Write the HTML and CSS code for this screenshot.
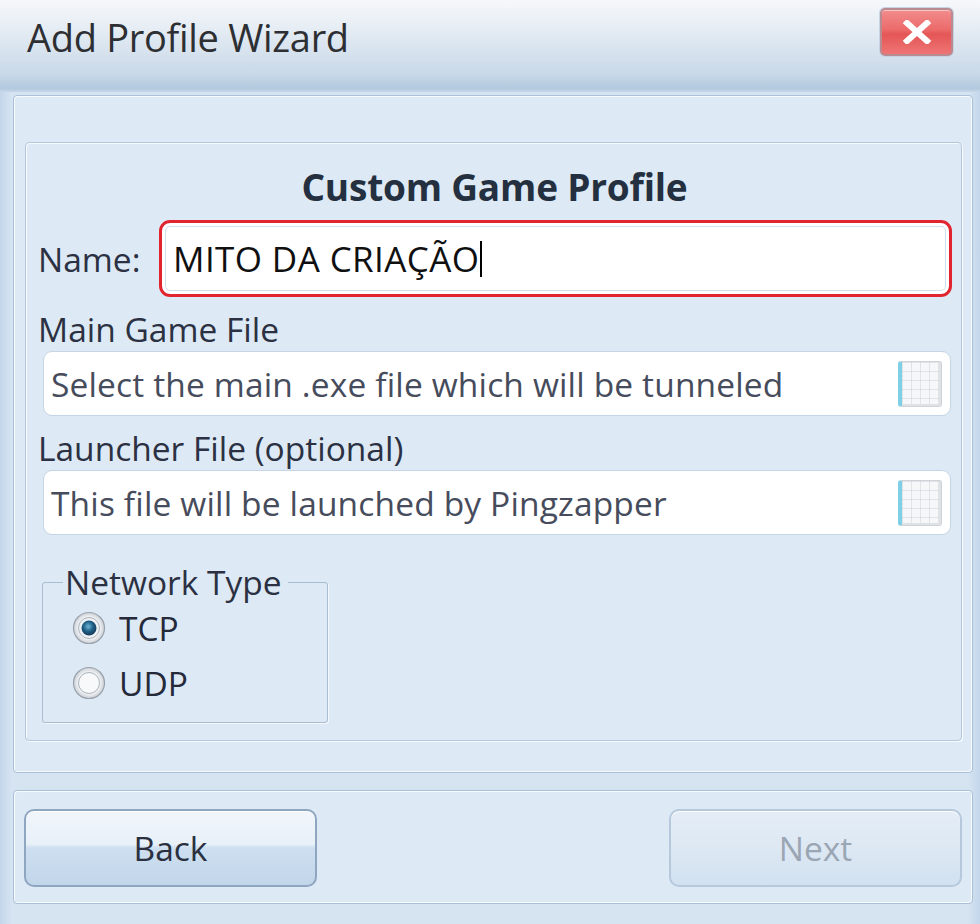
FILE: index.html
```html
<!DOCTYPE html>
<html>
<head>
<meta charset="utf-8">
<link rel="stylesheet" href="styles.css">
</head>
<body>
<div class="window">
  <div class="titlebar">
    <div class="title">Add Profile Wizard</div>
    <div class="close">
      <svg width="30" height="24" viewBox="0 0 30 24"><path d="M5 3 L25 21 M25 3 L5 21" stroke="#fff" stroke-width="6" stroke-linecap="square"/></svg>
    </div>
  </div>
  <div class="panel main">
    <div class="group">
      <div class="heading">Custom Game Profile</div>
      <div class="name-row">
        <div class="label name-label">Name:</div>
        <div class="name-box">MITO DA CRIAÇÃO<span class="caret"></span></div>
      </div>
      <div class="label field-label">Main Game File</div>
      <div class="file-box">
        <span class="placeholder">Select the main .exe file which will be tunneled</span>
        <span class="browse"></span>
      </div>
      <div class="label field-label">Launcher File (optional)</div>
      <div class="file-box">
        <span class="placeholder">This file will be launched by Pingzapper</span>
        <span class="browse"></span>
      </div>
      <fieldset class="net">
        <legend class="legend">Network Type</legend>
        <div class="radio-row">
          <svg class="radio" width="34" height="34" viewBox="0 0 34 34">
            <defs>
              <radialGradient id="ring" cx="50%" cy="50%" r="50%">
                <stop offset="60%" stop-color="#ffffff"/>
                <stop offset="100%" stop-color="#c9ced4"/>
              </radialGradient>
              <radialGradient id="dot" cx="45%" cy="40%" r="60%">
                <stop offset="0%" stop-color="#6fb6d8"/>
                <stop offset="55%" stop-color="#1f5f86"/>
                <stop offset="100%" stop-color="#163c5a"/>
              </radialGradient>
            </defs>
            <circle cx="17" cy="17" r="15.5" fill="url(#ring)" stroke="#9aa3ad" stroke-width="1.2"/>
            <circle cx="17" cy="17" r="10.5" fill="#eef2f5" stroke="#aab3bc" stroke-width="1"/>
            <circle cx="17" cy="17" r="7.5" fill="url(#dot)"/>
          </svg>
          <span class="radio-label">TCP</span>
        </div>
        <div class="radio-row">
          <svg class="radio" width="34" height="34" viewBox="0 0 34 34">
            <circle cx="17" cy="17" r="15.5" fill="url(#ring)" stroke="#9aa3ad" stroke-width="1.2"/>
            <circle cx="17" cy="17" r="10.5" fill="#f7f9fa" stroke="#aab3bc" stroke-width="1"/>
          </svg>
          <span class="radio-label">UDP</span>
        </div>
      </fieldset>
    </div>
  </div>
  <div class="panel footer">
    <div class="btn">Back</div>
    <div class="btn disabled">Next</div>
  </div>
</div>
</body>
</html>
```
FILE: styles.css
```css
* { box-sizing: border-box; }
html, body { margin: 0; padding: 0; }
body {
  background: #cfdeee;
  font-family: "Open Sans", "DejaVu Sans", sans-serif;
  color: #2b3140;
}
.window {
  width: 980px;
  height: 924px;
  display: flex;
  flex-direction: column;
  background: linear-gradient(to right, #c3d6ea 0px, #d6e4f2 12px, #d6e4f2 968px, #c3d6ea 980px);
  overflow: hidden;
}
.titlebar {
  height: 92px;
  flex: none;
  display: flex;
  align-items: flex-start;
  padding-left: 27px;
  background: linear-gradient(to bottom, #f6f8fb 0%, #e3ebf3 35%, #c9d9e8 80%, #b3c9de 96%, #c6d7e8 100%);
}
.title {
  font-size: 38px;
  line-height: 1;
  margin-top: 18px;
  color: #2d2f33;
  letter-spacing: -0.3px;
}
.close {
  margin-left: auto;
  margin-right: 27px;
  margin-top: 8px;
  width: 73px;
  height: 48px;
  border-radius: 5px;
  border: 2px solid #b98a92;
  background: linear-gradient(to bottom, #f28c8c 0%, #ec6a6a 45%, #e55656 55%, #ee7575 100%);
  box-shadow: 0 0 0 1px #c6d3e2, inset 0 1px 0 rgba(255,255,255,0.5);
  display: flex;
  align-items: center;
  justify-content: center;
}
.panel {
  background: #dde9f5;
  border: 1px solid #a9c0d8;
  border-radius: 4px;
  box-shadow: inset 1px 1px 0 #f7fbff, inset -1px -1px 0 #f7fbff;
}
.main {
  margin: 3px 7px 0 13px;
  height: 678px;
  padding: 46px 10px 0 11px;
  flex: none;
}
.group {
  height: 599px;
  border: 1px solid #b3c7dc;
  border-radius: 4px;
  box-shadow: inset 1px 1px 0 #f8fbfe, 1px 1px 0 #f8fbfe;
  background: #dde9f5;
  padding: 0 10px 0 12px;
}
.heading {
  font-weight: bold;
  font-size: 37px;
  text-align: center;
  line-height: 44px;
  margin-top: 22px;
  color: #243040;
  letter-spacing: -0.2px;
}
.name-row {
  display: flex;
  align-items: center;
  margin-top: 11px;
}
.label {
  font-size: 33.5px;
  line-height: 40px;
  color: #2b3142;
}
.name-label {
  width: 121px;
  flex: none;
}
.name-box {
  flex: 1;
  height: 77px;
  margin-right: -1px;
  border: 3px solid #e2242e;
  border-radius: 11px;
  background: #fff;
  box-shadow: inset 0 0 0 3px #ffffff, inset 0 0 0 4px #d2dfec;
  font-size: 35px;
  color: #101010;
  padding-left: 11px;
  display: flex;
  align-items: center;
  letter-spacing: 0.4px;
}
.caret {
  display: inline-block;
  width: 2px;
  height: 36px;
  background: #000;
  margin-left: 1px;
}
.field-label {
  margin-top: 12px;
}
.file-box {
  margin: 2px 0 0 5px;
  width: 908px;
  height: 65px;
  background: #fff;
  border: 1px solid #c5d5e5;
  border-radius: 9px;
  display: flex;
  align-items: center;
  padding-left: 7px;
  padding-right: 8px;
}
.placeholder {
  font-size: 33.5px;
  color: #464c5c;
  flex: 1;
  letter-spacing: 0.15px;
}
.browse {
  width: 44px;
  height: 46px;
  border: 1px solid #cfd3d8;
  border-left: 4px solid #7fd0e6;
  border-radius: 3px;
  background-color: #f6f7f8;
  background-image:
    linear-gradient(to right, rgba(200,205,210,0.45) 1px, transparent 1px),
    linear-gradient(to bottom, rgba(200,205,210,0.45) 1px, transparent 1px);
  background-size: 9px 9px;
  box-shadow: inset -2px -2px 0 #dfe2e5;
}
.net {
  margin: 30px 0 0 4px;
  width: 286px;
  height: 158px;
  border: 1px solid #a9bcd0;
  border-radius: 3px;
  padding: 0 0 0 29px;
  box-shadow: 1px 1px 0 #f4f8fc;
}
.legend {
  font-size: 33.5px;
  line-height: 34px;
  color: #2b3142;
  padding: 0 6px 0 2px;
  margin-left: -9px;
}
.radio-row {
  display: flex;
  align-items: center;
  height: 55px;
}
.radio-row:first-of-type { margin-top: 1px; }
.radio { flex: none; }
.radio-label {
  font-size: 33.5px;
  margin-left: 13px;
  color: #252a3a;
}
.footer {
  margin: 17px 7px 0 13px;
  height: 114px;
  flex: none;
  display: flex;
  justify-content: space-between;
  align-items: flex-start;
  padding: 18px 10px 0 10px;
}
.btn {
  width: 293px;
  height: 78px;
  border: 2px solid #8fa6c0;
  border-radius: 10px;
  background: linear-gradient(to bottom, #f1f6fb 0%, #e8f0f8 45%, #cddff0 50%, #c2d6ea 100%);
  box-shadow: inset 0 1px 0 #fff;
  font-size: 33.5px;
  color: #2a3040;
  display: flex;
  align-items: center;
  justify-content: center;
}
.btn.disabled {
  border-color: #b5c8dc;
  background: linear-gradient(to bottom, #e4edf6 0%, #dde8f3 50%, #d1e1f0 100%);
  color: #9aa6b3;
}
```
